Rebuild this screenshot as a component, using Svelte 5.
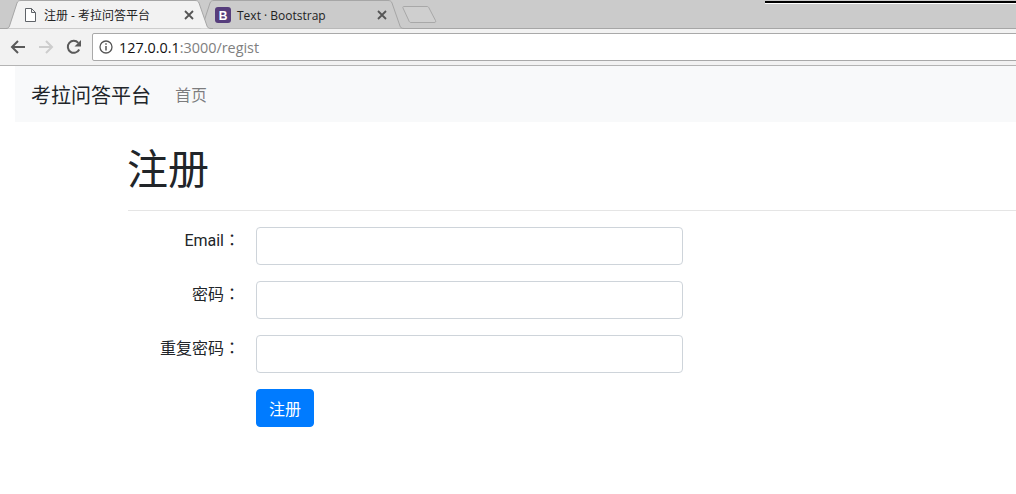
<script>
    let email = '';
    let password = '';
    let repeat = '';

    const tabs = [
        { title: '注册 - 考拉问答平台', active: true },
        { title: 'Text · Bootstrap', active: false }
    ];
</script>

<div class="chrome">
    <div class="tabstrip">
        {#each tabs as tab}
            <div class="tab" class:active={tab.active}>
                <svg class="tab-shape" width="208" height="29" viewBox="0 0 208 29">
                    <path d="M0 28.5 H1 C3 28.500 4 27.500 4.500 26 L12 3 C12.600 1.200 14 .5 16 .5 H190 C192 .5 193.400 1.200 194 3 L202 26 C202.500 27.500 203.500 28.500 206 28.500 H208" />
                </svg>
                {#if tab.active}
                    <svg class="favicon" width="16" height="16" viewBox="0 0 16 16">
                        <path d="M3.500 1.500 H9.500 L13.500 5.500 V14.500 H3.500 Z M9.500 1.500 V5.500 H13.500" fill="#fff" stroke="#5f6368" stroke-width="1" />
                    </svg>
                {:else}
                    <svg class="favicon" width="16" height="16" viewBox="0 0 16 16">
                        <rect width="16" height="16" rx="3" fill="#563d7c" />
                        <text x="8" y="12.500" text-anchor="middle" class="bs-letter">B</text>
                    </svg>
                {/if}
                <span class="tab-title">{tab.title}</span>
                <svg class="tab-close" width="10" height="10" viewBox="0 0 10 10">
                    <path d="M1 1 L9 9 M9 1 L1 9" stroke="#555" stroke-width="1.800" />
                </svg>
            </div>
        {/each}
        <svg class="newtab" width="36" height="19" viewBox="0 0 36 19">
            <path d="M2 1.500 H25 C26 1.500 26.500 2 27 3 L33.500 15.500 C34 17 33.500 17.500 32 17.500 H9 C8 17.500 7.500 17 7 16 L1 3 C.5 2 1 1.500 2 1.500 Z" fill="#cfcfcf" stroke="#a8a8a8" />
        </svg>
        <div class="blackbar"></div>
    </div>
    <div class="toolbar">
        <svg class="nav-icon" width="16" height="16" viewBox="0 0 16 16">
            <path d="M15 8 H2.500 M8 2 L2 8 L8 14" fill="none" stroke="#5a5a5a" stroke-width="2" />
        </svg>
        <svg class="nav-icon" width="16" height="16" viewBox="0 0 16 16">
            <path d="M1 8 H13.500 M8 2 L14 8 L8 14" fill="none" stroke="#cdcdcd" stroke-width="2" />
        </svg>
        <svg class="nav-icon" width="16" height="16" viewBox="0 0 16 16">
            <path d="M13.200 10.500 A6 6 0 1 1 12.300 3.800" fill="none" stroke="#5a5a5a" stroke-width="2" />
            <path d="M15 1 V7.500 H8.500 Z" fill="#5a5a5a" />
        </svg>
        <div class="omnibox">
            <svg class="info" width="14" height="14" viewBox="0 0 14 14">
                <circle cx="7" cy="7" r="6" fill="none" stroke="#555" stroke-width="1.300" />
                <path d="M7 6 V10.500 M7 3.300 V4.800" stroke="#555" stroke-width="1.500" />
            </svg>
            <span class="host">127.0.0.1</span><span class="path">:3000/regist</span>
        </div>
    </div>
</div>

<div class="page">
    <nav class="navbar">
        <span class="brand">考拉问答平台</span>
        <span class="nav-link">首页</span>
    </nav>

    <main class="content">
        <h1>注册</h1>
        <hr />
        <form on:submit|preventDefault>
            <div class="form-row">
                <label for="email">Email<span class="colon">：</span></label>
                <input id="email" type="text" bind:value={email} />
            </div>
            <div class="form-row">
                <label for="password">密码<span class="colon">：</span></label>
                <input id="password" type="password" bind:value={password} />
            </div>
            <div class="form-row">
                <label for="repeat">重复密码<span class="colon">：</span></label>
                <input id="repeat" type="password" bind:value={repeat} />
            </div>
            <div class="form-row">
                <span class="spacer"></span>
                <button type="submit">注册</button>
            </div>
        </form>
    </main>
</div>

<style>
    :global(body) {
        margin: 0;
        background: #fff;
        overflow: hidden;
        font-family: Roboto, "Noto Sans CJK SC", sans-serif;
        color: #212529;
    }

    .chrome {
        font-family: "Open Sans", "Noto Sans CJK SC", sans-serif;
    }

    .tabstrip {
        position: relative;
        display: flex;
        align-items: flex-end;
        height: 29px;
        padding-left: 5px;
        background: #cbcbcb;
        box-sizing: border-box;
        border-bottom: 1px solid #a6a6a6;
    }

    .tab {
        position: relative;
        display: flex;
        align-items: center;
        width: 193px;
        height: 28px;
        margin-bottom: -1px;
        padding: 0 4px 0 17px;
        box-sizing: border-box;
        font-size: 12px;
    }

    .tab-shape {
        position: absolute;
        left: 0;
        bottom: 0;
    }

    .tab-shape path {
        fill: #cbcbcb;
        stroke: #a6a6a6;
    }

    .tab.active {
        z-index: 1;
    }

    .tab.active .tab-shape path {
        fill: #f2f2f2;
    }

    .favicon,
    .tab-title,
    .tab-close {
        position: relative;
    }

    .favicon {
        flex: none;
        margin-right: 6px;
    }

    .bs-letter {
        font-family: "Liberation Sans", sans-serif;
        font-size: 12px;
        font-weight: 700;
        fill: #fff;
    }

    .tab-title {
        flex: 1;
        color: #222;
        white-space: nowrap;
    }

    .tab-close {
        flex: none;
        margin-left: 8px;
    }

    .newtab {
        margin: 0 0 4px 11px;
    }

    .blackbar {
        position: absolute;
        left: 765px;
        right: 0;
        top: 1px;
        height: 2px;
        background: #000;
        border-bottom: 1px solid #fff;
    }

    .toolbar {
        display: flex;
        align-items: center;
        height: 37px;
        padding: 0 0 0 10px;
        gap: 11px;
        background: #f2f2f2;
        border-bottom: 1px solid #b4b4b4;
        box-sizing: border-box;
    }

    .nav-icon {
        flex: none;
        margin-right: 1px;
    }

    .omnibox {
        display: flex;
        align-items: center;
        flex: 1;
        height: 28px;
        margin-left: -2px;
        margin-right: -10px;
        padding-left: 6px;
        background: #fff;
        border: 1px solid #a9a9a9;
        border-radius: 2px;
        box-sizing: border-box;
        font-size: 14.4px;
        white-space: nowrap;
    }

    .info {
        flex: none;
        margin-right: 6px;
    }

    .host {
        color: #111;
    }

    .path {
        color: #808080;
    }

    .page {
        padding-left: 15px;
    }

    .navbar {
        display: flex;
        align-items: center;
        height: 56px;
        padding: 0 16px;
        background: #f8f9fa;
    }

    .brand {
        font-size: 20px;
        margin-right: 24px;
    }

    .nav-link {
        font-size: 16px;
        color: rgba(0, 0, 0, 0.5);
    }

    .content {
        padding: 24px 0 0 113px;
    }

    h1 {
        margin: 0 0 0 -1px;
        font-size: 41px;
        font-weight: 400;
        line-height: 48px;
    }

    hr {
        margin: 16px 0;
        border: 0;
        border-top: 1px solid rgba(0, 0, 0, 0.1);
    }

    .form-row {
        display: flex;
        align-items: flex-start;
        margin-bottom: 16px;
    }

    label,
    .spacer {
        width: 112px;
        flex: none;
        margin-right: 16px;
        text-align: right;
        font-size: 16px;
        line-height: 24px;
    }

    .colon {
        font-family: "Noto Sans CJK TC", sans-serif;
    }

    input {
        width: 427px;
        height: 38px;
        padding: 6px 12px;
        box-sizing: border-box;
        background: #fff;
        border: 1px solid #ced4da;
        border-radius: 4px;
        font-size: 16px;
    }

    button {
        height: 38px;
        padding: 0 12px;
        background: #007bff;
        border: 1px solid #007bff;
        border-radius: 4px;
        color: #fff;
        font-family: inherit;
        font-size: 16px;
    }
</style>
